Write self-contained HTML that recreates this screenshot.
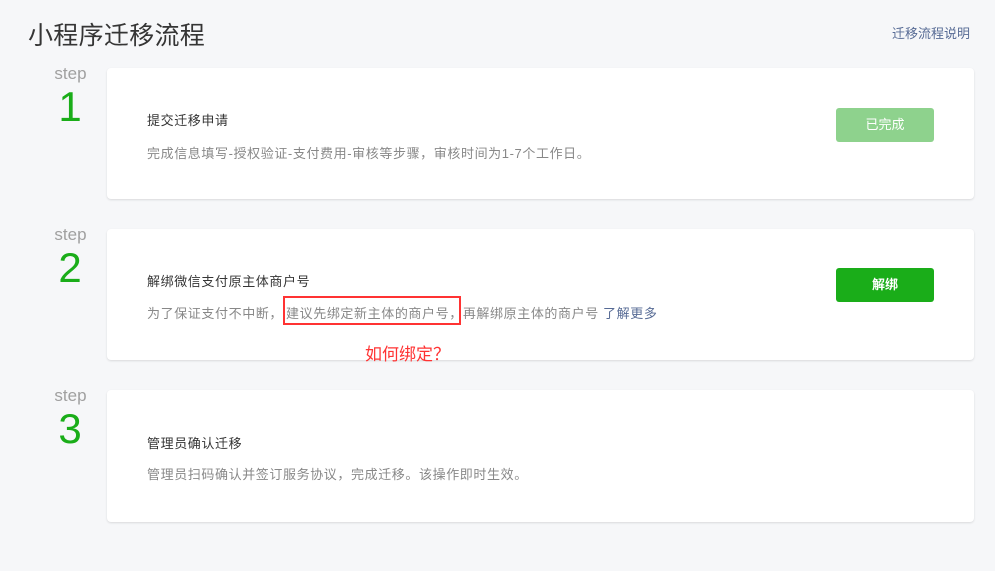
<!DOCTYPE html>
<html><head><meta charset="utf-8"><style>
body{margin:0;width:995px;height:571px;background:#f6f7f9;font-family:"Liberation Sans","Noto Sans CJK SC",sans-serif;position:relative;overflow:hidden}
.a{position:absolute;white-space:nowrap}
.card{position:absolute;left:107px;width:867px;height:131px;background:#fff;border-radius:4px;box-shadow:0 1px 2px rgba(0,0,0,.12)}
.step{position:absolute;left:52px;width:37px;text-align:center;color:#a0a0a0;font-size:17px}
.num{position:absolute;left:50px;width:40px;text-align:center;color:#1aad19;font-size:42px;line-height:42px}
.t{font-size:13px;color:#353535;letter-spacing:0.6px}
.d{font-size:13px;color:#888;letter-spacing:0.6px}
.btn{position:absolute;left:836px;width:98px;height:34px;border-radius:3px;color:#fff;font-size:13px;text-align:center;line-height:34px}
</style></head><body>
<div class="a" style="left:28px;top:16px;font-size:25px;color:#353535;letter-spacing:0.3px">小程序迁移流程</div>
<div class="a" style="left:892px;top:23px;font-size:13px;color:#576b95">迁移流程说明</div>

<div class="card" style="top:68px"></div>
<div class="card" style="top:229px"></div>
<div class="card" style="top:390px;height:132px"></div>

<div class="step" style="top:64px">step</div><div class="num" style="top:86px">1</div>
<div class="step" style="top:225px">step</div><div class="num" style="top:247px">2</div>
<div class="step" style="top:386px">step</div><div class="num" style="top:408px">3</div>

<div class="a t" style="left:147px;top:110px">提交迁移申请</div>
<div class="a d" style="left:147px;top:143px">完成信息填写-授权验证-支付费用-审核等步骤，审核时间为1-7个工作日。</div>
<div class="btn" style="top:108px;background:#8ed28d">已完成</div>

<div class="a t" style="left:147px;top:271px">解绑微信支付原主体商户号</div>
<div class="a d" style="left:147px;top:303px">为了保证支付不中断，<span style="margin-left:3px">建议先绑定新主体的商户号，</span>再解绑原主体的商户号 <span style="color:#576b95">了解更多</span></div>
<div class="btn" style="top:268px;background:#1aad19;font-weight:bold">解绑</div>
<div class="a" style="left:283px;top:296px;width:174px;height:25px;border:2px solid #f33"></div>
<div class="a" style="left:365px;top:340px;font-size:17px;color:#f33">如何绑定？</div>

<div class="a t" style="left:147px;top:433px">管理员确认迁移</div>
<div class="a d" style="left:147px;top:464px">管理员扫码确认并签订服务协议，完成迁移。该操作即时生效。</div>
</body></html>
